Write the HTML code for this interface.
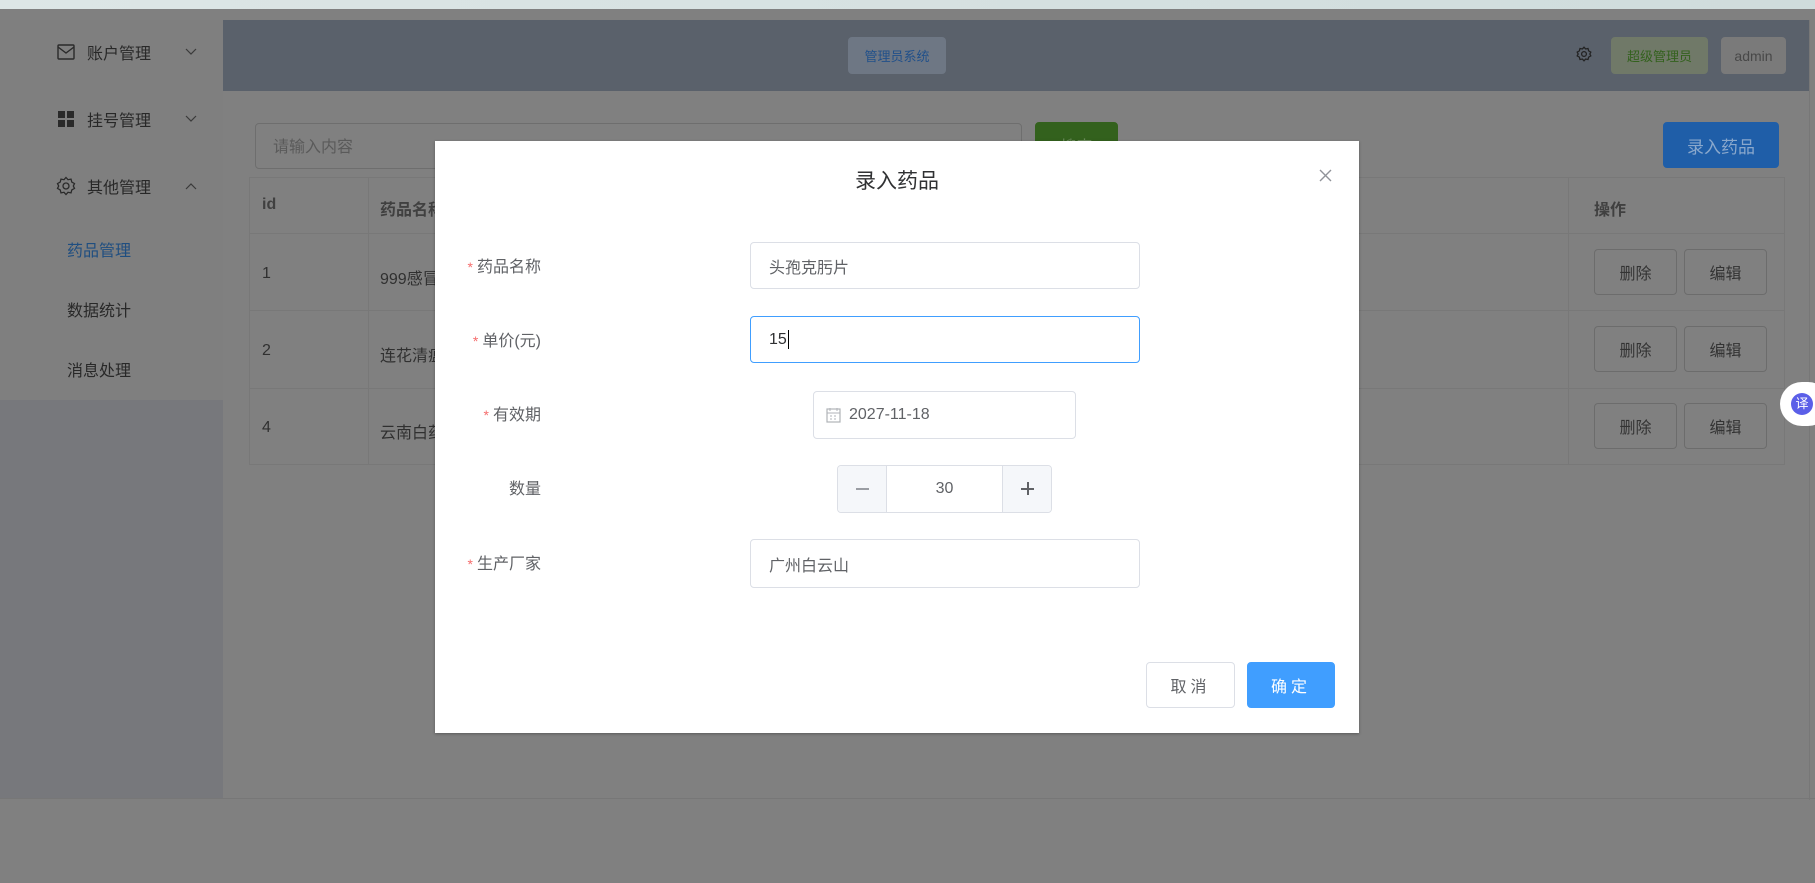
<!DOCTYPE html>
<html><head><meta charset="utf-8"><style>
*{margin:0;padding:0;box-sizing:border-box}
body{width:1815px;height:883px;overflow:hidden;background:#808080;font-family:"Liberation Sans","Noto Sans CJK SC",sans-serif;position:relative;color:#2a2a2a}
.a{position:absolute}
.menu{font-size:16px;color:#282828}
.btn{position:absolute;border:1px solid #6c6c6c;border-radius:4px;display:flex;align-items:center;justify-content:center;font-size:16px}
.lbl{position:absolute;right:1274px;font-size:16px;color:#606266;text-align:right}
.lbl b{color:#f56c6c;font-weight:normal;margin-right:4px;font-size:14px}
.inp{position:absolute;border:1px solid #dcdfe6;border-radius:4px;background:#fff;font-size:16px;color:#606266;display:flex;align-items:center}
</style></head><body>
<div class="a" style="left:0;top:0;width:1815px;height:9px;background:linear-gradient(90deg,#dde6e6,#cfdcdc)"></div>
<!-- sidebar -->
<div class="a" style="left:0;top:20px;width:223px;height:380px;background:#7f7f7f"></div>
<div class="a" style="left:0;top:400px;width:223px;height:399px;background:#77787c"></div>
<div class="a" style="left:0;top:798px;width:1815px;height:1px;background:#777"></div>
<svg class="a" style="left:57px;top:44px" width="18" height="16" viewBox="0 0 18 16"><rect x="1" y="1" width="16" height="14" rx="1" fill="none" stroke="#2a2a2a" stroke-width="1.4"/><path d="M1 3l8 6 8-6" fill="none" stroke="#2a2a2a" stroke-width="1.4"/></svg>
<div class="a menu" style="left:87px;top:40px">账户管理</div>
<svg class="a" style="left:185px;top:48px" width="12" height="8"><path d="M1 1l5 5 5-5" fill="none" stroke="#3a3a3a" stroke-width="1.2"/></svg>
<svg class="a" style="left:58px;top:111px" width="17" height="17"><rect x="0" y="0" width="7" height="7" fill="#2a2a2a"/><rect x="9" y="0" width="7" height="7" fill="#2a2a2a"/><rect x="0" y="9" width="7" height="7" fill="#2a2a2a"/><rect x="9" y="9" width="7" height="7" fill="#2a2a2a"/></svg>
<div class="a menu" style="left:87px;top:107px">挂号管理</div>
<svg class="a" style="left:185px;top:115px" width="12" height="8"><path d="M1 1l5 5 5-5" fill="none" stroke="#3a3a3a" stroke-width="1.2"/></svg>
<svg class="a" style="left:56px;top:176px" width="20" height="20" viewBox="0 0 20 20"><path d="M10 1.5l2 2.2 3-.6.8 3 2.7 1.5-1.2 2.4 1.2 2.4-2.7 1.5-.8 3-3-.6-2 2.2-2-2.2-3 .6-.8-3L1.5 12.4 2.7 10 1.5 7.6 4.2 6.1l.8-3 3 .6z" fill="none" stroke="#2a2a2a" stroke-width="1.3"/><circle cx="10" cy="10" r="3" fill="none" stroke="#2a2a2a" stroke-width="1.3"/></svg>
<div class="a menu" style="left:87px;top:174px">其他管理</div>
<svg class="a" style="left:185px;top:182px" width="12" height="8"><path d="M1 7l5-5 5 5" fill="none" stroke="#3a3a3a" stroke-width="1.2"/></svg>
<div class="a menu" style="left:67px;top:237px;color:#1f4e80">药品管理</div>
<div class="a menu" style="left:67px;top:297px">数据统计</div>
<div class="a menu" style="left:67px;top:357px">消息处理</div>
<!-- header -->
<div class="a" style="left:223px;top:20px;width:1586px;height:71px;background:#5a616b"></div>
<div class="a" style="left:1809px;top:20px;width:1px;height:780px;background:#777"></div>
<div class="btn" style="left:848px;top:37px;width:98px;height:37px;background:#6e7784;border-color:#6e7784;color:#21508a;font-size:13px">管理员系统</div>
<svg class="a" style="left:1576px;top:46px" width="16" height="16" viewBox="0 0 20 20"><path d="M10 1.5l2 2.2 3-.6.8 3 2.7 1.5-1.2 2.4 1.2 2.4-2.7 1.5-.8 3-3-.6-2 2.2-2-2.2-3 .6-.8-3L1.5 12.4 2.7 10 1.5 7.6 4.2 6.1l.8-3 3 .6z" fill="none" stroke="#222" stroke-width="1.6"/><circle cx="10" cy="10" r="3" fill="none" stroke="#222" stroke-width="1.6"/></svg>
<div class="btn" style="left:1611px;top:37px;width:97px;height:37px;background:#707968;border-color:#707968;color:#33611d;font-size:13px">超级管理员</div>
<div class="btn" style="left:1721px;top:37px;width:65px;height:37px;background:#7a7a7a;border-color:#7a7a7a;color:#484848;font-size:14px">admin</div>
<!-- search -->
<div class="a" style="left:255px;top:123px;width:767px;height:46px;border:1px solid #6e6e6e;border-radius:4px;font-size:16px;color:#5a5a5a;padding:9px 17px">请输入内容</div>
<div class="btn" style="left:1035px;top:122px;width:83px;height:46px;background:#33611d;border-color:#33611d;color:#6a8a5a">搜索</div>
<div class="btn" style="left:1663px;top:122px;width:116px;height:46px;background:#1f5ea8;border-color:#1f5ea8;color:#8aa8cc;font-size:17px">录入药品</div>
<!-- table -->
<div class="a" style="left:249px;top:177px;width:1536px;height:288px;border:1px solid #787878"></div>
<div class="a" style="left:249px;top:233px;width:1536px;height:1px;background:#787878"></div>
<div class="a" style="left:249px;top:310px;width:1536px;height:1px;background:#787878"></div>
<div class="a" style="left:249px;top:388px;width:1536px;height:1px;background:#787878"></div>
<div class="a" style="left:368px;top:177px;width:1px;height:288px;background:#787878"></div>
<div class="a" style="left:1568px;top:177px;width:1px;height:288px;background:#787878"></div>
<div class="a" style="left:262px;top:196px;font-size:16px;font-weight:bold;color:#404040">id</div>
<div class="a" style="left:380px;top:196px;font-size:16px;font-weight:bold;color:#404040">药品名称</div>
<div class="a" style="left:1594px;top:196px;font-size:16px;font-weight:bold;color:#404040">操作</div>
<div class="a" style="left:262px;top:265px;font-size:16px;color:#303030">1</div><div class="a" style="left:380px;top:265px;font-size:16px;color:#303030">999感冒灵</div>
<div class="a" style="left:262px;top:342px;font-size:16px;color:#303030">2</div><div class="a" style="left:380px;top:342px;font-size:16px;color:#303030">连花清瘟</div>
<div class="a" style="left:262px;top:419px;font-size:16px;color:#303030">4</div><div class="a" style="left:380px;top:419px;font-size:16px;color:#303030">云南白药</div>
<div class="btn" style="left:1594px;top:249px;width:83px;height:46px;color:#333">删除</div><div class="btn" style="left:1684px;top:249px;width:83px;height:46px;color:#333">编辑</div>
<div class="btn" style="left:1594px;top:326px;width:83px;height:46px;color:#333">删除</div><div class="btn" style="left:1684px;top:326px;width:83px;height:46px;color:#333">编辑</div>
<div class="btn" style="left:1594px;top:403px;width:83px;height:46px;color:#333">删除</div><div class="btn" style="left:1684px;top:403px;width:83px;height:46px;color:#333">编辑</div>
<!-- translate bubble -->
<div class="a" style="left:1780px;top:382px;width:50px;height:44px;border-radius:22px;background:#fff"></div>
<div class="a" style="left:1791px;top:393px;width:22px;height:22px;border-radius:11px;background:#5b5fe8;color:#fff;font-size:13px;text-align:center;line-height:22px">译</div>
<!-- modal -->
<div class="a" style="left:435px;top:141px;width:924px;height:592px;background:#fff;box-shadow:0 1px 3px rgba(0,0,0,.3)"></div>
<div class="a" style="left:435px;top:165px;width:924px;text-align:center;font-size:21px;color:#303133">录入药品</div>
<svg class="a" style="left:1319px;top:169px" width="13" height="13"><path d="M1 1l11 11M12 1L1 12" stroke="#909399" stroke-width="1.4"/></svg>
<div class="lbl" style="top:253px"><b>*</b>药品名称</div>
<div class="inp" style="left:750px;top:242px;width:390px;height:47px;padding-left:18px">头孢克肟片</div>
<div class="lbl" style="top:327px"><b>*</b>单价(元)</div>
<div class="inp" style="left:750px;top:316px;width:390px;height:47px;padding-left:18px;border-color:#409eff;color:#303133">15<span style="display:inline-block;width:1px;height:19px;background:#000;margin-left:1px"></span></div>
<div class="lbl" style="top:401px"><b>*</b>有效期</div>
<div class="inp" style="left:813px;top:391px;width:263px;height:48px;padding-left:12px">
<svg width="15" height="16" viewBox="0 0 15 16" style="margin-right:8px"><rect x="1" y="2" width="13" height="13" fill="none" stroke="#b0b3b8" stroke-width="1.2"/><path d="M1 6h13M4 1v3M11 1v3M4 9h2M8 9h2M4 12h2M8 12h2" stroke="#b0b3b8" stroke-width="1"/></svg>2027-11-18</div>
<div class="lbl" style="top:475px">数量</div>
<div class="inp" style="left:837px;top:465px;width:215px;height:48px;justify-content:center;color:#606266">30
<div class="a" style="left:0;top:0;width:49px;height:46px;background:#f5f7fa;border-right:1px solid #dcdfe6;border-radius:4px 0 0 4px"><div class="a" style="left:18px;top:22px;width:13px;height:1.5px;background:#9a9da3"></div></div>
<div class="a" style="right:0;top:0;width:49px;height:46px;background:#f5f7fa;border-left:1px solid #dcdfe6;border-radius:0 4px 4px 0"><div class="a" style="left:18px;top:22px;width:13px;height:1.5px;background:#606266"></div><div class="a" style="left:24px;top:16px;width:1.5px;height:13px;background:#606266"></div></div>
</div>
<div class="lbl" style="top:550px"><b>*</b>生产厂家</div>
<div class="inp" style="left:750px;top:539px;width:390px;height:49px;padding-left:18px">广州白云山</div>
<div class="btn" style="left:1146px;top:662px;width:89px;height:46px;border-color:#dcdfe6;color:#606266;background:#fff;letter-spacing:4px">取消</div>
<div class="btn" style="left:1247px;top:662px;width:88px;height:46px;border-color:#409eff;background:#409eff;color:#fff;letter-spacing:4px">确定</div>
</body></html>
